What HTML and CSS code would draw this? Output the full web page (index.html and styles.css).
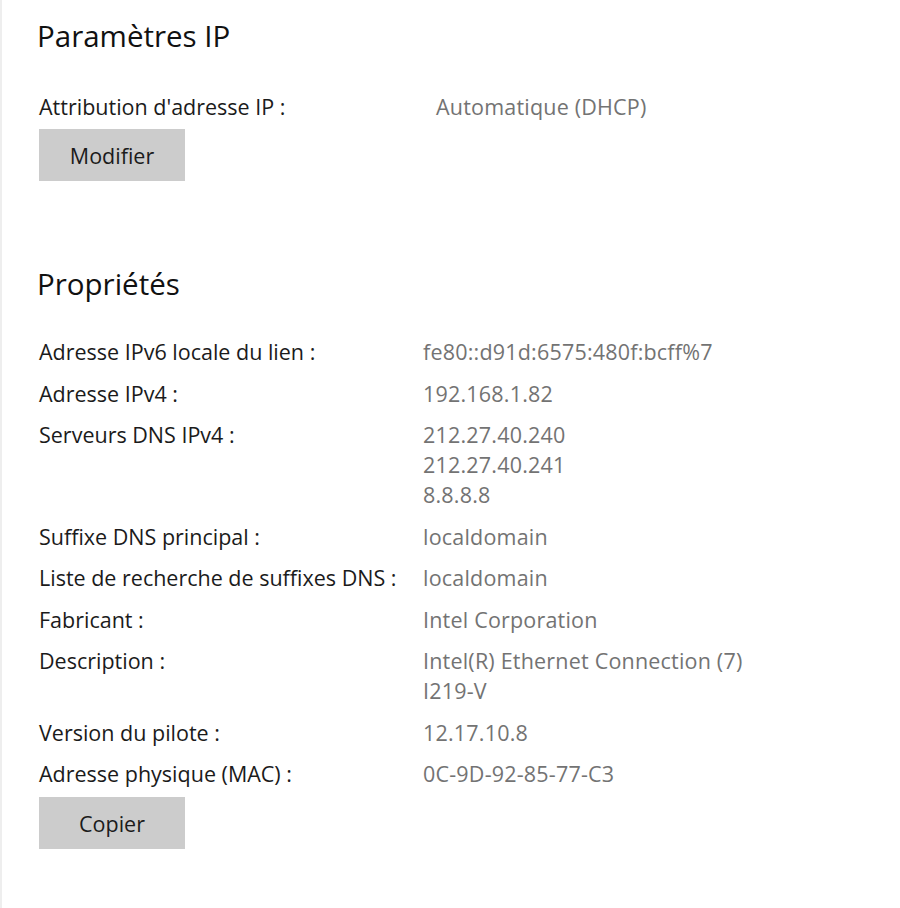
FILE: index.html
```html
<!DOCTYPE html>
<html lang="fr">
<head>
<meta charset="utf-8">
<title>Paramètres IP</title>
<link rel="stylesheet" href="styles.css">
</head>
<body>
<div class="page">
  <section class="section section-ip">
    <h2 class="title">Paramètres IP</h2>
    <div class="props props-ip">
      <div class="label">Attribution d'adresse IP :</div>
      <div class="value">Automatique (DHCP)</div>
    </div>
    <button class="btn" type="button">Modifier</button>
  </section>

  <section class="section section-props">
    <h2 class="title">Propriétés</h2>
    <div class="props props-main">
      <div class="label">Adresse IPv6 locale du lien :</div>
      <div class="value">fe80::d91d:6575:480f:bcff%7</div>

      <div class="label">Adresse IPv4 :</div>
      <div class="value">192.168.1.82</div>

      <div class="label">Serveurs DNS IPv4 :</div>
      <div class="value">212.27.40.240<br>212.27.40.241<br>8.8.8.8</div>

      <div class="label">Suffixe DNS principal :</div>
      <div class="value">localdomain</div>

      <div class="label">Liste de recherche de suffixes DNS :</div>
      <div class="value">localdomain</div>

      <div class="label">Fabricant :</div>
      <div class="value">Intel Corporation</div>

      <div class="label">Description :</div>
      <div class="value">Intel(R) Ethernet Connection (7)<br>I219-V</div>

      <div class="label">Version du pilote :</div>
      <div class="value">12.17.10.8</div>

      <div class="label">Adresse physique (MAC) :</div>
      <div class="value">0C-9D-92-85-77-C3</div>
    </div>
    <button class="btn" type="button">Copier</button>
  </section>
</div>
</body>
</html>
```

FILE: styles.css
```css
html, body {
  margin: 0;
  padding: 0;
  background: #ffffff;
}

body {
  font-family: "Open Sans", "Noto Sans", "Liberation Sans", sans-serif;
  color: #1b1b1b;
  min-height: 908px;
  box-sizing: border-box;
  border-left: 2px solid #eeeeee;
}

.page {
  padding: 16px 0 0 35px;
}

.section {
  display: flex;
  flex-direction: column;
  align-items: flex-start;
}

.section-props {
  margin-top: 83px;
}

.title {
  margin: 0;
  font-size: 29.5px;
  line-height: 40px;
  font-weight: 400;
  color: #111111;
}

.props {
  display: grid;
  row-gap: 11.5px;
  margin: 36px 0 0 2px;
  font-size: 21.5px;
  line-height: 30px;
}

.props-ip {
  grid-template-columns: 397px auto;
}

.props-main {
  margin-top: 33px;
  grid-template-columns: 384px auto;
}

.label {
  color: #1b1b1b;
}

.value {
  color: #737373;
  letter-spacing: 0.2px;
}

.btn {
  margin: 7px 0 0 2px;
  width: 146px;
  height: 52px;
  border: 0;
  background: #cccccc;
  font-family: inherit;
  font-size: 21.5px;
  color: #1b1b1b;
  padding: 0;
  display: flex;
  align-items: center;
  justify-content: center;
}

.section-props .btn {
  margin-top: 8px;
}
```
